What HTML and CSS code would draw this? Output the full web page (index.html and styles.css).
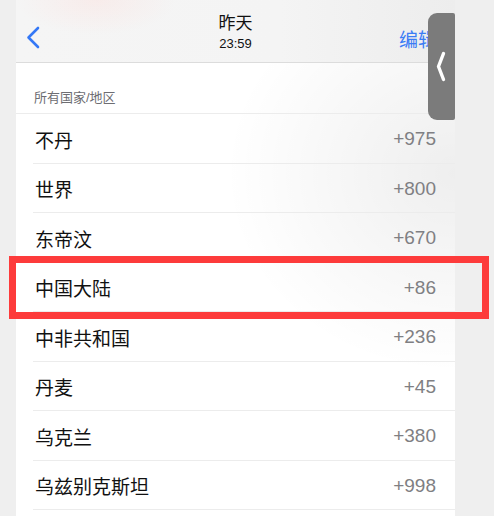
FILE: index.html
```html
<!DOCTYPE html>
<html lang="zh">
<head>
<meta charset="utf-8">
<title>国家/地区</title>
<link rel="stylesheet" href="styles.css">
</head>
<body>
<div class="panel">
  <header class="nav">
    <div class="nav-left">
      <svg class="back" width="14" height="23" viewBox="0 0 14 23"><path d="M12 2 L2.5 11.5 L12 21" fill="none" stroke="#3478f6" stroke-width="2.6" stroke-linecap="round" stroke-linejoin="round"/></svg>
    </div>
    <div class="nav-title">
      <div class="title">昨天</div>
      <div class="subtitle">23:59</div>
    </div>
    <div class="nav-right">编辑</div>
  </header>
  <div class="list">
    <div class="section-label">所有国家/地区</div>
    <div class="rows">
      <div class="row"><span class="name">不丹</span><span class="code">+975</span></div>
      <div class="row"><span class="name">世界</span><span class="code">+800</span></div>
      <div class="row"><span class="name">东帝汶</span><span class="code">+670</span></div>
      <div class="row"><span class="name">中国大陆</span><span class="code">+86</span></div>
      <div class="row"><span class="name">中非共和国</span><span class="code">+236</span></div>
      <div class="row"><span class="name">丹麦</span><span class="code">+45</span></div>
      <div class="row"><span class="name">乌克兰</span><span class="code">+380</span></div>
      <div class="row"><span class="name">乌兹别克斯坦</span><span class="code">+998</span></div>
    </div>
  </div>
</div>
<div class="side-tab">
  <svg width="10" height="31" viewBox="0 0 10 31"><path d="M7.5 2.5 L2.5 15.5 L7.5 28.5" fill="none" stroke="#ffffff" stroke-width="3.4" stroke-linecap="round" stroke-linejoin="round"/></svg>
</div>
<div class="highlight"></div>
</body>
</html>
```
FILE: styles.css
```css
html, body {
  margin: 0;
  padding: 0;
}
body {
  width: 494px;
  height: 516px;
  overflow: hidden;
  background: #efefef;
  font-family: "Liberation Sans", "Noto Sans CJK SC", sans-serif;
  position: relative;
}
.panel {
  margin-left: 16px;
  width: 439px;
  height: 516px;
  background: #ffffff;
  overflow: hidden;
}
.nav {
  height: 63px;
  box-sizing: border-box;
  border-bottom: 1px solid #dcdcdc;
  display: grid;
  grid-template-columns: 1fr auto 1fr;
  align-items: center;
  background:
    radial-gradient(ellipse 80px 35px at 80px 0px, rgba(255, 215, 210, 0.3), rgba(255, 215, 210, 0) 100%),
    linear-gradient(90deg, #f5f5f5 0%, #f4f4f4 60%, #ededed 100%);
}
.nav-left {
  display: flex;
  align-items: center;
  padding-left: 10px;
  padding-top: 13px;
}
.nav-title {
  text-align: center;
  color: #111111;
  padding-top: 3px;
}
.title {
  font-size: 17px;
  line-height: 22px;
}
.subtitle {
  font-size: 13px;
  line-height: 16px;
  margin-top: 1px;
}
.nav-right {
  justify-self: end;
  padding-right: 18px;
  padding-top: 14px;
  font-size: 19px;
  color: #3b7cf5;
}
.list {
  background: radial-gradient(ellipse 230px 200px at 100% 110px, rgba(0, 0, 0, 0.065), rgba(0, 0, 0, 0) 100%);
}
.section-label {
  height: 51px;
  box-sizing: border-box;
  padding: 27px 0 0 18px;
  font-size: 13px;
  line-height: 16px;
  color: #6d6d72;
  border-bottom: 1px solid #ececec;
}
.row {
  height: 49.5px;
  box-sizing: border-box;
  margin-left: 17px;
  padding: 2px 19px 0 1px;
  border-bottom: 1px solid #ececec;
  display: flex;
  align-items: center;
  justify-content: space-between;
  font-size: 19px;
}
.name {
  color: #111111;
  padding-left: 1px;
}
.code {
  color: #7f7f83;
}
.side-tab {
  position: absolute;
  left: 428px;
  top: 13px;
  width: 27px;
  height: 107px;
  background: #7b7b7b;
  border-radius: 9px 2px 2px 9px;
  display: flex;
  align-items: center;
  justify-content: center;
}
.side-tab svg {
  margin-left: -2px;
}
.highlight {
  position: absolute;
  left: 9px;
  top: 256px;
  width: 480px;
  height: 63px;
  box-sizing: border-box;
  border: 7px solid #fd3b3b;
}
```
